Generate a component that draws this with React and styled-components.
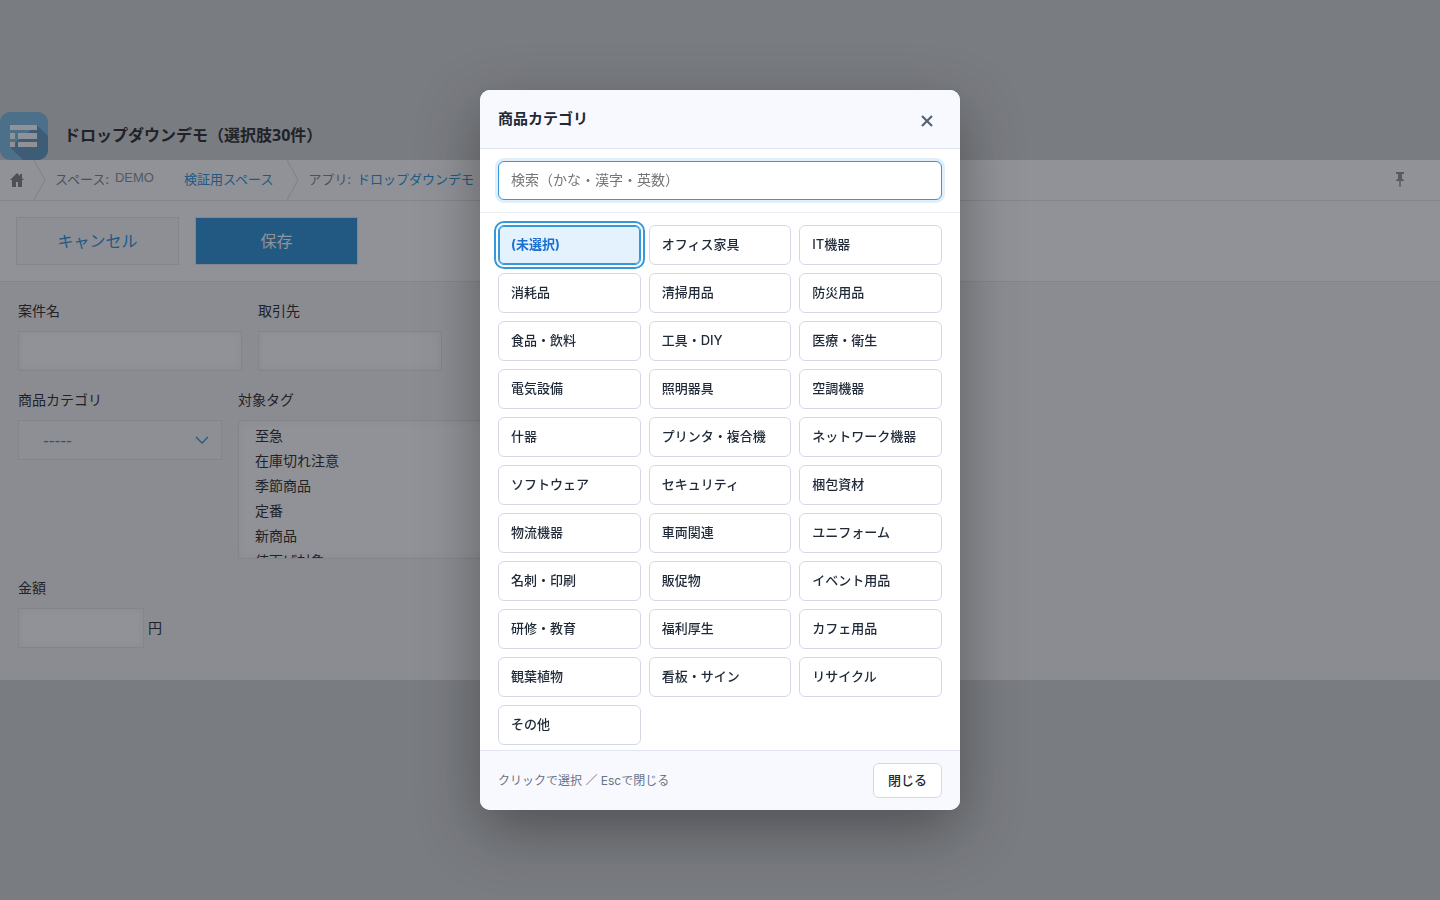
import React, { useState } from "react";
import styled, { createGlobalStyle } from "styled-components";

const colors = {
  page: "#d4d7d7",
  form: "#f5f5f5",
  line: "#e3e7e8",
  blue: "#3498db",
  text: "#333333",
  dark: "#1f2937",
  panel: "#f8f9fe",
  panelLine: "#e2e6f0",
  optionLine: "#d5d8e4",
};

const GlobalStyle = createGlobalStyle`
  * {
    box-sizing: border-box;
  }

  body {
    margin: 0;
    background: ${colors.page};
    color: ${colors.text};
    font-family: "Noto Sans", "Noto Sans CJK JP", sans-serif;
    font-size: 14px;
  }

  button,
  input,
  select {
    font-family: inherit;
  }
`;

/**
 * Page behind the dialog
 */
const Page = styled.div`
  padding-top: 112px;
`;

const AppHeader = styled.header`
  display: flex;
  align-items: center;
  gap: 16px;
  height: 48px;
`;

const AppTitle = styled.h1`
  margin: 0;
  padding-bottom: 2px;
  font-size: 16px;
  line-height: 24px;
`;

const Breadcrumb = styled.nav`
  display: flex;
  align-items: center;
  height: 41px;
  padding-right: 32px;
  background: white;
  border-bottom: 1px solid ${colors.line};
  color: #888888;
  font-size: 13px;

  a {
    color: ${colors.blue};
    text-decoration: none;
  }
`;

const HomeLink = styled.a`
  display: flex;
  padding: 0 9px;
`;

const Crumb = styled.span`
  display: flex;
  gap: ${({ $gap }) => $gap || 0}px;
  padding: 0 14px 4px 9px;
  white-space: nowrap;
`;

const SpaceName = styled.span`
  width: 75px;
  padding-left: 6px;
  color: #8799a5;
  font-family: "Liberation Sans", sans-serif;
  line-height: 18px;
`;

const PinButton = styled.button`
  display: flex;
  margin-left: auto;
  padding: 0;
  border: none;
  background: none;
`;

const Toolbar = styled.div`
  display: flex;
  gap: 16px;
  padding: 16px;
  background: white;
  border-bottom: 1px solid ${colors.line};
`;

const ToolbarButton = styled.button`
  width: 163px;
  height: 48px;
  padding: 0 0 2px;
  border: 1px solid ${colors.line};
  background: ${({ $primary }) => ($primary ? colors.blue : "#f7f9fa")};
  color: ${({ $primary }) => ($primary ? "white" : colors.blue)};
  font-size: 16px;
`;

const Form = styled.form`
  display: flex;
  flex-direction: column;
  gap: 20px;
  padding: 20px 18px 32px;
  background: ${colors.form};
`;

const FormRow = styled.div`
  display: flex;
  gap: 16px;
`;

const Field = styled.div`
  display: flex;
  flex-direction: column;
  gap: 11px;

  label {
    line-height: 18px;
  }
`;

const TextInput = styled.input`
  width: ${({ $width }) => $width}px;
  height: 40px;
  border: 1px solid ${colors.line};
  background: white;
  box-shadow: inset 0 0 8px #f0f1f2;
`;

const SelectWrap = styled.div`
  display: grid;
  align-items: center;

  > * {
    grid-area: 1 / 1;
  }

  svg {
    justify-self: end;
    margin-right: 13px;
    pointer-events: none;
  }
`;

const Select = styled.select`
  width: 204px;
  height: 40px;
  padding: 0 24px;
  border: 1px solid ${colors.line};
  border-radius: 0;
  appearance: none;
  background: #f7f9fa;
  color: ${colors.blue};
  font-family: "DejaVu Sans", sans-serif;
  font-size: 16px;
`;

const TagList = styled.ul`
  width: 260px;
  height: 139px;
  margin: 0;
  padding: 2px 0 0;
  overflow-y: auto;
  scrollbar-width: none;
  border: 1px solid ${colors.line};
  background: white;
  box-shadow: inset 0 0 8px #f0f1f2;
  list-style: none;
`;

const Tag = styled.li`
  padding: 0 16px;
  line-height: 25px;
`;

const AmountRow = styled.div`
  display: flex;
  align-items: center;
  gap: 4px;

  span {
    padding-bottom: 2px;
  }
`;

/**
 * Dialog
 */
const Overlay = styled.div`
  position: fixed;
  inset: 0;
  display: flex;
  align-items: center;
  justify-content: center;
  background: rgba(12, 14, 25, 0.45);
`;

const Dialog = styled.section`
  display: flex;
  flex-direction: column;
  width: 480px;
  max-width: 92vw;
  max-height: 80vh;
  overflow: hidden;
  border-radius: 10px;
  background: white;
  box-shadow: 0 20px 60px rgba(0, 0, 0, 0.35);
  color: ${colors.dark};
  font-family: Inter, "Noto Sans CJK JP", sans-serif;
`;

const DialogHeader = styled.div`
  display: flex;
  align-items: center;
  justify-content: space-between;
  padding: 14px 18px;
  border-bottom: 1px solid ${colors.panelLine};
  background: ${colors.panel};

  h2 {
    margin: 0;
    font-size: 15px;
    line-height: 20px;
  }
`;

const IconButton = styled.button`
  display: flex;
  align-items: center;
  justify-content: center;
  width: 30px;
  height: 30px;
  padding: 4px 0 0;
  border: none;
  background: none;
  color: #566274;
`;

const SearchBar = styled.div`
  padding: 12px 18px;
  border-bottom: 1px solid #eceef5;
`;

const SearchInput = styled.input`
  display: block;
  width: 100%;
  height: 39px;
  padding: 0 12px 2px;
  border: 1px solid ${colors.blue};
  border-radius: 6px;
  outline: none;
  box-shadow: 0 0 0 3px #e1effa;
  font-size: 14px;

  &::placeholder {
    color: #757575;
  }
`;

const OptionGrid = styled.div`
  display: grid;
  grid-template-columns: repeat(3, 1fr);
  gap: 8px;
  padding: 12px 18px;
  overflow-y: auto;
  scrollbar-width: none;
`;

const Option = styled.button`
  height: 40px;
  padding: 0 12px 4px;
  border: 1px solid ${({ $selected }) => ($selected ? colors.blue : colors.optionLine)};
  border-radius: 6px;
  outline: ${({ $selected }) => ($selected ? `2px solid ${colors.blue}` : "none")};
  outline-offset: 2px;
  background: ${({ $selected }) => ($selected ? "#e3f2fd" : "white")};
  box-shadow: ${({ $selected }) => ($selected ? `inset 0 0 0 1px ${colors.blue}` : "none")};
  color: ${({ $selected }) => ($selected ? "#1a6fd0" : colors.dark)};
  font-size: 13px;
  font-weight: ${({ $selected }) => ($selected ? 700 : 500)};
  text-align: left;
`;

const DialogFooter = styled.div`
  display: flex;
  align-items: center;
  justify-content: space-between;
  padding: 12px 18px;
  border-top: 1px solid ${colors.panelLine};
  background: ${colors.panel};
  color: #687386;
  font-size: 12px;

  span {
    padding-bottom: 2px;
  }
`;

const CloseButton = styled.button`
  height: 35px;
  padding: 0 14px 2px;
  border: 1px solid ${colors.optionLine};
  border-radius: 6px;
  background: white;
  color: ${colors.dark};
  font-size: 13px;
  font-weight: 500;
`;

const AppIcon = () => (
  <svg width="48" height="48" viewBox="0 0 48 48" aria-hidden="true">
    <rect width="48" height="48" rx="10" fill="#82c0e8" />
    <path d="M37 13L48 24V38A10 10 0 0 1 38 48H23L10 35Z" fill="#669dc3" />
    <path
      d="M10 13h27v5H10zM10 21h5v6h-5zM18 21h19v6H18zM10 30h5v5h-5zM18 30h19v5H18z"
      fill="white"
    />
  </svg>
);

const HomeIcon = () => (
  <svg width="16" height="16" viewBox="0 0 16 16" aria-hidden="true">
    <path d="M8 1L1 8h2v7h4v-5h2v5h4V8h2l-2-2V2h-2v2z" fill="#888888" />
  </svg>
);

const Separator = () => (
  <svg width="12" height="40" viewBox="0 0 12 40" aria-hidden="true">
    <path d="M0 0L11 20L0 40" fill="none" stroke="#dcdfe0" />
  </svg>
);

const PinIcon = () => (
  <svg width="16" height="18" viewBox="0 0 16 18" aria-hidden="true">
    <path d="M4 1h8v2h-2v5l2 1v1H4V9l2-1V3H4z" fill="#999999" />
    <path d="M7 10h2v6H7z" fill="#b4b4b4" />
  </svg>
);

const tags = ["至急", "在庫切れ注意", "季節商品", "定番", "新商品", "値下げ対象"];

const categories = [
  "(未選択)", "オフィス家具", "IT機器",
  "消耗品", "清掃用品", "防災用品",
  "食品・飲料", "工具・DIY", "医療・衛生",
  "電気設備", "照明器具", "空調機器",
  "什器", "プリンタ・複合機", "ネットワーク機器",
  "ソフトウェア", "セキュリティ", "梱包資材",
  "物流機器", "車両関連", "ユニフォーム",
  "名刺・印刷", "販促物", "イベント用品",
  "研修・教育", "福利厚生", "カフェ用品",
  "観葉植物", "看板・サイン", "リサイクル",
  "その他",
];

/**
 * Category picker, filtered by the search box
 */
const CategoryDialog = ({ selected, onSelect, onClose }) => {
  const [query, setQuery] = useState("");

  return (
    <Overlay>
      <Dialog role="dialog" aria-modal="true" aria-labelledby="dialog-title" lang="ja">
        <DialogHeader>
          <h2 id="dialog-title">商品カテゴリ</h2>
          <IconButton type="button" aria-label="閉じる" onClick={onClose}>
            <svg width="12" height="12" viewBox="0 0 12 12" aria-hidden="true">
              <path d="M1 1l10 10M11 1L1 11" stroke="currentColor" strokeWidth="2.2" />
            </svg>
          </IconButton>
        </DialogHeader>
        <SearchBar>
          <SearchInput
            aria-label="検索"
            placeholder="検索（かな・漢字・英数）"
            value={query}
            onChange={e => setQuery(e.target.value)}
          />
        </SearchBar>
        <OptionGrid>
          {categories.filter(name => name.includes(query)).map(name => (
            <Option
              key={name}
              type="button"
              $selected={name === selected}
              onClick={() => onSelect(name)}
            >
              {name}
            </Option>
          ))}
        </OptionGrid>
        <DialogFooter>
          <span>クリックで選択 ／ Escで閉じる</span>
          <CloseButton type="button" onClick={onClose}>閉じる</CloseButton>
        </DialogFooter>
      </Dialog>
    </Overlay>
  );
};

const App = () => {
  const [open, setOpen] = useState(true);
  const [category, setCategory] = useState("(未選択)");

  return (
    <>
      <GlobalStyle />
      <Page lang="ja">
        <AppHeader>
          <AppIcon />
          <AppTitle>ドロップダウンデモ（選択肢30件）</AppTitle>
        </AppHeader>
        <Breadcrumb>
          <HomeLink href="#" aria-label="ホーム"><HomeIcon /></HomeLink>
          <Separator />
          <Crumb>
            スペース:
            <SpaceName>DEMO</SpaceName>
            <a href="#space">検証用スペース</a>
          </Crumb>
          <Separator />
          <Crumb $gap={6}>
            アプリ:
            <a href="#app">ドロップダウンデモ</a>
          </Crumb>
          <PinButton type="button" aria-label="ピン留め"><PinIcon /></PinButton>
        </Breadcrumb>
        <Toolbar>
          <ToolbarButton type="button">キャンセル</ToolbarButton>
          <ToolbarButton type="button" $primary>保存</ToolbarButton>
        </Toolbar>
        <Form>
          <FormRow>
            <Field>
              <label htmlFor="subject">案件名</label>
              <TextInput id="subject" $width={224} />
            </Field>
            <Field>
              <label htmlFor="client">取引先</label>
              <TextInput id="client" $width={184} />
            </Field>
          </FormRow>
          <FormRow>
            <Field>
              <label htmlFor="category">商品カテゴリ</label>
              <SelectWrap>
                <Select id="category" onMouseDown={() => setOpen(true)}>
                  <option>-----</option>
                </Select>
                <svg width="14" height="8" viewBox="0 0 14 8" aria-hidden="true">
                  <path d="M1 1l6 6l6-6" fill="none" stroke={colors.blue} strokeWidth="1.3" />
                </svg>
              </SelectWrap>
            </Field>
            <Field>
              <label id="tags-label">対象タグ</label>
              <TagList role="listbox" aria-labelledby="tags-label">
                {tags.map(tag => (
                  <Tag key={tag} role="option">{tag}</Tag>
                ))}
              </TagList>
            </Field>
          </FormRow>
          <FormRow>
            <Field>
              <label htmlFor="amount">金額</label>
              <AmountRow>
                <TextInput id="amount" $width={126} />
                <span>円</span>
              </AmountRow>
            </Field>
          </FormRow>
        </Form>
      </Page>
      {open && (
        <CategoryDialog
          selected={category}
          onSelect={setCategory}
          onClose={() => setOpen(false)}
        />
      )}
    </>
  );
};

export default App;
